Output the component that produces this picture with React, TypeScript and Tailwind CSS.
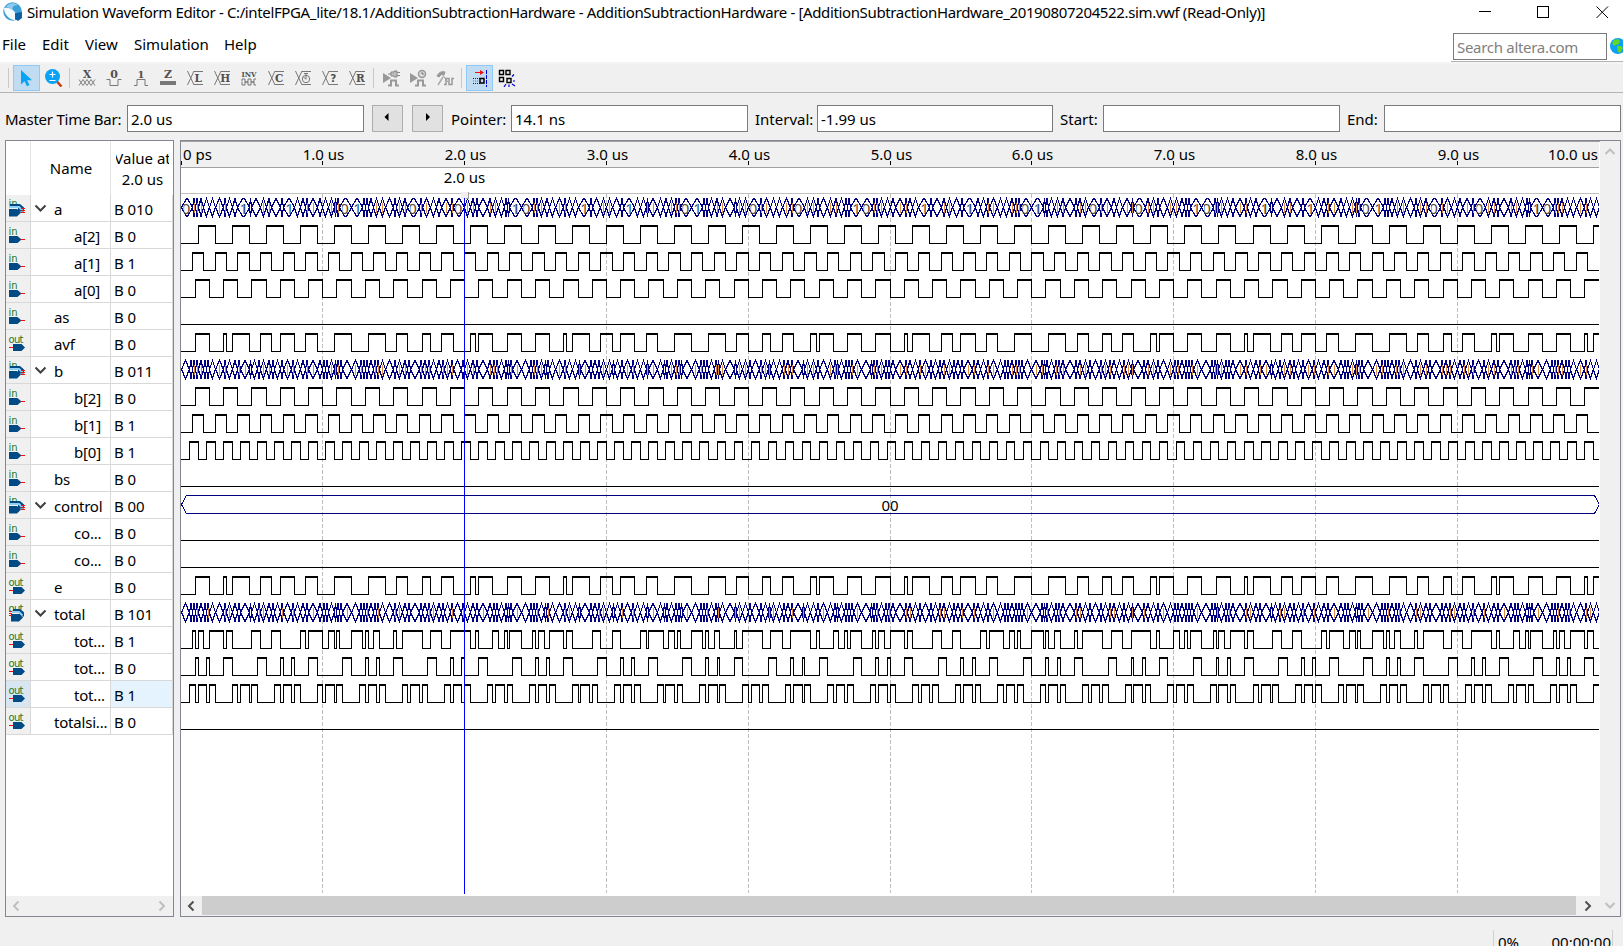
import React from "react";

const X0 = 181;
const SCALE = 0.1418;
const END = 10000;

type Fn = (t: number) => number;
const clock = (half: number): Fn => (t) => Math.floor(t / half) % 2;
const a2 = clock(120);
const a1 = clock(80);
const a0 = clock(100);
const b2 = clock(100);
const b1 = clock(80);
const b0 = clock(60);
const busA: Fn = (t) => a2(t) * 4 + a1(t) * 2 + a0(t);
const busB: Fn = (t) => b2(t) * 4 + b1(t) * 2 + b0(t);
const sum: Fn = (t) => busA(t) + busB(t);
const total: Fn = (t) => sum(t) & 7;
const bit = (f: Fn, n: number): Fn => (t) => (f(t) >> n) & 1;
const zero: Fn = () => 0;

type Row = {
  name: string;
  value: string;
  dir: "in" | "out";
  level: 0 | 1;
  bus?: boolean;
  fn: Fn;
  selected?: boolean;
};

const rows: Row[] = [
  { name: "a", value: "B 010", dir: "in", level: 0, bus: true, fn: busA },
  { name: "a[2]", value: "B 0", dir: "in", level: 1, fn: a2 },
  { name: "a[1]", value: "B 1", dir: "in", level: 1, fn: a1 },
  { name: "a[0]", value: "B 0", dir: "in", level: 1, fn: a0 },
  { name: "as", value: "B 0", dir: "in", level: 0, fn: zero },
  { name: "avf", value: "B 0", dir: "out", level: 0, fn: bit(sum, 3) },
  { name: "b", value: "B 011", dir: "in", level: 0, bus: true, fn: busB },
  { name: "b[2]", value: "B 0", dir: "in", level: 1, fn: b2 },
  { name: "b[1]", value: "B 1", dir: "in", level: 1, fn: b1 },
  { name: "b[0]", value: "B 1", dir: "in", level: 1, fn: b0 },
  { name: "bs", value: "B 0", dir: "in", level: 0, fn: zero },
  { name: "control", value: "B 00", dir: "in", level: 0, bus: true, fn: zero },
  { name: "co...", value: "B 0", dir: "in", level: 1, fn: zero },
  { name: "co...", value: "B 0", dir: "in", level: 1, fn: zero },
  { name: "e", value: "B 0", dir: "out", level: 0, fn: bit(sum, 3) },
  { name: "total", value: "B 101", dir: "out", level: 0, bus: true, fn: total },
  { name: "tot...", value: "B 1", dir: "out", level: 1, fn: bit(total, 2) },
  { name: "tot...", value: "B 0", dir: "out", level: 1, fn: bit(total, 1) },
  { name: "tot...", value: "B 1", dir: "out", level: 1, fn: bit(total, 0), selected: true },
  { name: "totalsi...", value: "B 0", dir: "out", level: 0, fn: zero },
];

type Seg = { s: number; e: number; v: number };
function segments(fn: Fn): Seg[] {
  const out: Seg[] = [];
  let s = 0;
  let v = fn(0);
  for (let t = 20; t < END; t += 20) {
    const n = fn(t);
    if (n !== v) {
      out.push({ s, e: t, v });
      s = t;
      v = n;
    }
  }
  out.push({ s, e: END, v });
  return out;
}
const px = (t: number) => Math.floor(X0 + t * SCALE) - X0;

/* Single-bit trace: thick high level, thin low level and edges. */
function BitWave({ fn, base }: { fn: Fn; base: number }) {
  let d = "";
  for (const g of segments(fn)) {
    const x1 = px(g.s);
    const x2 = px(g.e);
    const top = base - 18;
    if (g.v) d += `M${x1} ${top}H${x2 + 1}V${top + 2}H${x1}Z`;
    else d += `M${x1} ${base}H${x2 + 1}V${base + 1}H${x1}Z`;
    if (g.s > 0) d += `M${x1} ${top}h1V${base + 1}h-1Z`;
  }
  return <path d={d} fill="#000" fillRule="nonzero" />;
}

function BusWave({ fn, base, id }: { fn: Fn; base: number; id: string }) {
  const segs = segments(fn);
  const top = base - 18 + 0.5;
  const bot = base + 0.5;
  const mid = base - 9 + 0.5;
  let d = "";
  let marks = "";
  const labels: { x: number; c: string }[] = [];
  for (const g of segs) {
    const x1 = px(g.s) + 0.5;
    const x2 = px(g.e) + 0.5;
    const w = x2 - x1;
    const k = Math.min(5, w / 2);
    d += `M${x1} ${mid}L${x1 + k} ${top}H${x2 - k}L${x2} ${mid}L${x2 - k} ${bot}H${x1 + k}Z`;
    const m = (g.v >> 1) & 1;
    const c = (x1 + x2) / 2;
    if (w > 9) labels.push({ x: c, c: String(m) });
    else if (m) marks += `M${Math.floor(c)} ${base - 13}h1v10h-1Z`;
  }
  if (segs.length === 1) {
    return (
      <g>
        <path d={d} fill="none" stroke="#000080" shapeRendering="crispEdges" />
        <text x={709} y={base - 2} textAnchor="middle" fontSize="15">00</text>
      </g>
    );
  }
  return (
    <g>
      <path d={d} fill="none" stroke="#000080" strokeWidth="1.25" shapeRendering="crispEdges" />
      <path d={marks} fill="#dd8f3d" />
      {labels.map((l, i) => (
        <g key={i}>
          <clipPath id={`${id}-${i}`}>
            <rect x={l.x - 3.5} y={base - 15} width={7.5} height={14} />
          </clipPath>
          <text x={l.x + (l.c === "0" ? -1 : 0.5)} y={base - 2} textAnchor="middle" fontSize="15" clipPath={`url(#${id}-${i})`} fill={l.c === "1" ? "#174a86" : "#5a4630"}>
            {l.c}
          </text>
          {l.c === "1" && <rect x={Math.floor(l.x)} y={base - 12} width={1} height={10} fill="#dd8f3d" />}
        </g>
      ))}
    </g>
  );
}

/* Chart canvas: origin is (181,142) of the window. */
function Waveforms() {
  const ticks = [1, 2, 3, 4, 5, 6, 7, 8, 9];
  return (
    <svg width="1419" height="754" viewBox="0 0 1419 754" className="block shrink-0 overflow-hidden" shapeRendering="crispEdges" fontFamily="'Noto Sans', sans-serif">
      <rect width="1419" height="754" fill="#fff" />
      <rect width="1418" height="25" fill="#f0f0f0" />
      <rect y="25" width="1418" height="1" fill="#a0a0a0" />
      <rect y="51" width="1418" height="1" fill="#c0c0c0" />
      <g fontSize="15" fill="#000">
        <text x="2" y="18">0 ps</text>
        {ticks.map((t) => (
          <text key={t} x={px(t * 1000) + 1.5} y="18" textAnchor="middle">{t}.0 us</text>
        ))}
        <text x="1417" y="18" textAnchor="end">10.0 us</text>
        <text x="283.500" y="41" textAnchor="middle">2.0 us</text>
      </g>
      <rect x="0" y="19" width="1" height="4" />
      {ticks.map((t) => (
        <g key={t}>
          <rect x={px(t * 1000)} y="19" width="1" height="4" fill="#000" />
          <line x1={px(t * 1000) + 0.5} x2={px(t * 1000) + 0.5} y1="52" y2="751" stroke="#bfbfbf" strokeDasharray="4 2" />
        </g>
      ))}
      {rows.map((r, i) => {
        const base = 74 + i * 27;
        return r.bus ? <BusWave key={i} id={`bus${i}`} fn={r.fn} base={base} /> : <BitWave key={i} fn={r.fn} base={base} />;
      })}
      <rect x="1418" width="1" height="754" fill="#fff" />
      <rect x="280" y="50" width="8" height="7" fill="#f0f0f0" />
      <path d="M287.500 50v6.500h-3" fill="none" stroke="#a0a0a0" />
      <rect x="283" y="56" width="1" height="696" fill="#0000ff" />
    </svg>
  );
}

function PinIcon({ dir, bus }: { dir: "in" | "out"; bus?: boolean }) {
  const isIn = dir === "in";
  return (
    <svg width="24" height="26" viewBox="0 0 24 26" className="block shrink-0" fontFamily="'DejaVu Sans', sans-serif">
      <text x="2.500" y={bus ? 12 : 12.5} fontSize="10" fill="#1f7a1f" textLength={isIn ? 9 : 15}>{dir}</text>
      <g transform="translate(0 1)">
        {isIn && !bus && (
          <>
            <path d="M3 13h8.500l4 3.500l-4 3.500H3Z" fill="#004a86" />
            <path d="M14.500 16.500h4.500" stroke="#f01010" />
          </>
        )}
        {isIn && bus && (
          <>
            <path d="M4 8h10l4 3.500v4h-6V12H4Z" fill="#004a86" />
            <path d="M3 11h10l3.500 3.500" fill="none" stroke="#8fd0f8" strokeWidth="2" />
            <path d="M3 13h8l4 3.500l-4 4H3Z" fill="#004a86" />
            <path d="M15 12.500h4M15 14.500h4M15 16.500h4" stroke="#f01010" />
          </>
        )}
        {!isIn && !bus && (
          <>
            <path d="M7 13h8.500l3.500 3.500l-3.500 3.500H7Z" fill="#004a86" />
            <path d="M3 16.500h4" stroke="#f01010" />
          </>
        )}
        {!isIn && bus && (
          <>
            <path d="M7 8h7l4 3.500v4h-5V12H7Z" fill="#004a86" />
            <path d="M6 11h7l3.500 3.500" fill="none" stroke="#8fd0f8" strokeWidth="2" />
            <path d="M5 13h8l4 3.500l-4 4H5Z" fill="#004a86" />
            <path d="M3 10.500h3M3 12.500h3M3 14.500h3" stroke="#f01010" />
          </>
        )}
      </g>
    </svg>
  );
}

function TreeRow({ row }: { row: Row }) {
  const line = "border-b border-[#d8d8d8]";
  return (
    <div className="flex h-[27px] shrink-0 text-[15px] leading-[26px]">
      <div className={`w-[25px] border-r ${line} ${row.selected ? "bg-[#d8e6f2]" : "bg-[#f0f0f0]"}`}>
        <PinIcon dir={row.dir} bus={row.bus} />
      </div>
      <div className={`flex w-[80px] items-center overflow-hidden whitespace-nowrap border-r pt-0.5 ${line}`}>
        {row.bus ? (
          <svg width="23" height="26" viewBox="0 0 23 26" className="mb-1 block shrink-0">
            <path d="M4.500 11.500l5 5l5-5" fill="none" stroke="#404040" strokeWidth="2" />
          </svg>
        ) : (
          <span className={row.level ? "w-[43px] shrink-0" : "w-[23px] shrink-0"} />
        )}
        <span className="tracking-[-0.2px]">{row.name}</span>
      </div>
      <div className={`w-[62px] whitespace-nowrap border-r pl-[3px] pt-px tracking-[-0.05px] ${line} ${row.selected ? "bg-[#e5f3ff]" : ""}`}>{row.value}</div>
    </div>
  );
}

function Tool({ children, active }: { children: React.ReactNode; active?: boolean }) {
  return (
    <div className={`flex h-[26px] w-[27px] shrink-0 items-center justify-center ${active ? "border border-[#90c8f6] bg-[#c0dcf3]" : ""}`}>
      <svg width="18" height="18" viewBox="0 0 18 18" className="shrink-0" fill="none" stroke="#777" fontFamily="'DejaVu Serif', serif">
        {children}
      </svg>
    </div>
  );
}
const Sep = ({ className }: { className: string }) => <div className={`h-5 w-px shrink-0 bg-[#c8c8c8] ${className}`} />;

function Letter({ c, mono }: { c: string; mono?: boolean }) {
  return (
    <>
      <path d="M1.500 2l6.500 14M1.500 16L8 2M8 2.500h9M8 15.500h9" />
      <text x="12.300" y="13" textAnchor="middle" stroke="none" fill="#505050" fontSize="10.500" fontWeight="bold" fontFamily={mono ? "'DejaVu Sans', sans-serif" : "'DejaVu Serif', serif"}>{c}</text>
    </>
  );
}
const SmallGlyph = ({ c, size = 11 }: { c: string; size?: number }) => (
  <text x="9" y="9" textAnchor="middle" stroke="none" fill="#505050" fontSize={size} fontWeight="bold">{c}</text>
);

function Toolbar() {
  return (
    <div className="flex h-[29px] shrink-0 items-center border-b border-[#b4b4b4] bg-[#f0f0f0]">
      <Sep className="ml-[8px] mr-[4px]" />
      <Tool active>
        <path d="M3 1v14.500l3.500-3.200l2.500 5l2.500-1.200l-2.400-4.800H14Z" fill="#0aa2f5" stroke="none" />
      </Tool>
      <Tool>
        <path d="M10.500 11l6 6.500" stroke="#c63e14" strokeWidth="2.500" />
        <circle cx="7.500" cy="7.500" r="7.500" fill="#0aa2f5" stroke="none" />
        <path d="M4.500 5.500h6M7.500 2.500v6M4.500 11.500h6" stroke="#fff" strokeWidth="1.200" />
      </Tool>
      <Sep className="ml-[2px] mr-[3px]" />
      <Tool>
        <text x="9" y="8.500" textAnchor="middle" stroke="none" fill="#505050" fontSize="10.500" fontWeight="bold">X</text>
        <path d="M1 10.500l4 6l4-6l4 6l4-6M1 16.500l4-6l4 6l4-6l4 6" strokeWidth=".9" />
      </Tool>
      <Tool>
        <SmallGlyph c="0" />
        <path d="M1.500 10.500h3.500v6h8v-6h3.500" />
      </Tool>
      <Tool>
        <SmallGlyph c="1" size={10} />
        <path d="M2 16.500h3v-6h8v6h3" />
      </Tool>
      <Tool>
        <SmallGlyph c="Z" />
        <rect x="1" y="12" width="16" height="4" fill="#777" stroke="none" />
      </Tool>
      <Tool><Letter c="L" /></Tool>
      <Tool><Letter c="H" /></Tool>
      <Tool>
        <text x="1.500" y="8" stroke="none" fill="#505050" fontSize="8" fontWeight="bold" textLength="15" lengthAdjust="spacingAndGlyphs">INV</text>
        <path d="M2 12.500v-2.500h3v3h3v-3h3v3h3v-3h2M2 13v3h3v-3h3v3h3v-3h3v3h2" />
      </Tool>
      <Tool><Letter c="C" /></Tool>
      <Tool>
        <path d="M1.500 2l6.500 14M1.500 16L8 2M8 2.500h9M8 15.500h9" />
        <circle cx="12" cy="10" r="3.700" />
        <path d="M12 4v6M10 4.500h4M9.500 8l2.500 2.500" />
      </Tool>
      <Tool><Letter c="?" mono /></Tool>
      <Tool><Letter c="R" /></Tool>
      <Sep className="ml-[3px] mr-[3px]" />
      <Tool>
        <path d="M1 4l8 5l-8 5Z" fill="#999" stroke="none" />
        <path d="M9 3h3v-1h3v6h-3V7H9ZM6 5h3M15 3.500h3M15 6.500h3" fill="#bbb" stroke="#888" />
        <path d="M6 16.500h3v-5h5v5h3" strokeWidth="2" stroke="#999" />
      </Tool>
      <Tool>
        <path d="M1 4l8 5l-8 5Z" fill="#999" stroke="none" />
        <circle cx="13" cy="5" r="3.500" fill="#ddd" stroke="#999" strokeWidth="1.500" />
        <path d="M13 3v2h2" />
        <path d="M6 16.500h3v-5h5v5h3" strokeWidth="2" stroke="#999" />
      </Tool>
      <Tool>
        <path d="M1 7c2-4 5-5 8-4l-1 3l-2-1l-3 3ZM6 5l6 8" fill="#999" stroke="#999" />
        <path d="M7 8l-5 8" stroke="#aaa" strokeWidth="1.500" />
        <path d="M8 15.500h2v-6h3v6h3v-6h2" stroke="#999" strokeWidth="1.500" />
      </Tool>
      <Sep className="ml-[3px] mr-[4px]" />
      <Tool active>
        <path d="M4 3.500h7" stroke="#e11" />
        <path d="M9 1l4 2.500l-4 2.500" fill="#e11" stroke="none" />
        <path d="M2 9.500h7M2 14.500h7" stroke="#222" strokeDasharray="1 1" />
        <path d="M2 12h6" stroke="#777" strokeDasharray="1 1" />
        <rect x="9" y="9.500" width="4" height="4.500" stroke="#000" strokeWidth="1.500" />
        <path d="M15.500 1v17" stroke="#0000d8" strokeDasharray="4 1" />
      </Tool>
      <Tool>
        <path d="M1.500 1.500h4v4h-4ZM8 1.500h4v4H8ZM1.500 8.500h4v4h-4ZM9 9.500h4v4H9Z" stroke="#000" strokeWidth="1.400" />
        <path d="M14 7.500l2-2M15 12h2M14 15l3 2M11 15.500v2.500M8 15l-2 3" stroke="#0000d8" strokeWidth="1.200" />
      </Tool>
    </div>
  );
}

function Field({ label, value, lw, fw }: { label: string; value?: string; lw: string; fw: string }) {
  return (
    <>
      <div className={`shrink-0 whitespace-nowrap pt-0.5 ${lw}`}>{label}</div>
      <div className={`h-[27px] shrink-0 border border-[#7a7a7a] bg-white pl-[3px] pt-px leading-[25px] ${fw}`}>{value}</div>
    </>
  );
}
function Step({ d, className }: { d: string; className: string }) {
  return (
    <div className={`flex h-[27px] w-[31px] shrink-0 items-center justify-center border border-[#adadad] bg-[#e1e1e1] ${className}`}>
      <svg width="10" height="10" viewBox="0 0 10 10" className="mb-1"><path d={d} fill="#000" /></svg>
    </div>
  );
}
function Chevron({ d, color, className }: { d: string; color: string; className: string }) {
  return (
    <svg width="12" height="12" viewBox="0 0 12 12" className={`shrink-0 ${className}`}>
      <path d={d} fill="none" stroke={color} strokeWidth="2" />
    </svg>
  );
}
const LEFT = "M8.500 1.500L4 6l4.500 4.500";
const RIGHT = "M3.500 1.500L8 6l-4.500 4.500";

export default function App() {
  return (
    <div className="flex h-[946px] w-[1623px] flex-col overflow-hidden bg-[#f0f0f0] font-['Noto_Sans',sans-serif] text-[15px] text-black">
      <header className="flex h-[25px] shrink-0 items-start bg-white">
        <svg width="20" height="20" viewBox="0 0 20 20" className="ml-[3px] mt-[2px] shrink-0">
          <circle cx="9.500" cy="9.500" r="9.300" fill="#3e9fd6" />
          <path d="M3 5C5 1 11 0 15 3c-5 0-7 3-4 6c2 2 5 2 7 2c0 3-1 4-3 6C12 10 8 6 3 5Z" fill="#8ecbee" />
          <path d="M1 6c4-1 9 1 11 5c1 3 1 5 0 7c-3 0-5-1-7-3C2 12 1 9 1 6Z" fill="#f4fafd" />
          <path d="M12 11l7-1v6l-4 3l-3-2Z" fill="#0c62a5" />
        </svg>
        <div className="ml-[4px] w-[1440px] shrink-0 whitespace-nowrap text-[15px] leading-[25px] tracking-[-0.365px]">
          Simulation Waveform Editor - C:/intelFPGA_lite/18.1/AdditionSubtractionHardware - AdditionSubtractionHardware - [AdditionSubtractionHardware_20190807204522.sim.vwf (Read-Only)]
        </div>
        <svg width="150" height="24" viewBox="0 0 150 24" className="shrink-0" stroke="#000" fill="none">
          <path d="M12 11.500h12" />
          <rect x="70.500" y="6.500" width="11" height="11" />
          <path d="M129.500 6.500l11.500 11.500M141 6.500L129.500 18" />
        </svg>
      </header>
      <nav className="flex h-[37px] shrink-0 bg-white">
        <div className="flex w-[1451px] pl-[2px] pt-[7px] leading-[24px]">
          <span className="w-[40px]">File</span>
          <span className="w-[43px]">Edit</span>
          <span className="w-[49px]">View</span>
          <span className="w-[90px] tracking-[-0.05px]">Simulation</span>
          <span>Help</span>
        </div>
        <div className="flex flex-1 items-start overflow-hidden border-b border-[#b4b4b4] pl-[2px] pt-[8px]">
          <div className="h-[27px] w-[154px] shrink-0 border border-[#7a7a7a] pl-[3px] pt-px leading-[25px] tracking-[-0.5px] text-[#808080]"><span className="tracking-[-0.3px]">Search altera.com</span></div>
          <svg width="16" height="16" viewBox="0 0 16 16" className="ml-[3px] mt-[5px] shrink-0">
            <circle cx="8" cy="8" r="8" fill="#0aa2f5" />
            <path d="M4 2l4-1l2 2l-1 3l-3 1l-2 1l-2-3ZM7 8l4 0l2 2l-3 5l-2-1Z" fill="#62d62a" />
          </svg>
        </div>
      </nav>
      <div className="h-[2px] shrink-0 bg-[#f4f4f4]" />
      <Toolbar />
      <div className="flex h-[47px] shrink-0 items-start pt-[12px] leading-[24px]">
        <Field label="Master Time Bar:" value="2.0 us" lw="w-[127px] pl-[5px] tracking-[-0.25px]" fw="w-[237px]" />
        <Step d="M5.500 1v8L1.500 5Z" className="ml-[8px]" />
        <Step d="M3 1v8l4-4Z" className="ml-[9px]" />
        <Field label="Pointer:" value="14.1 ns" lw="w-[68px] pl-[8px]" fw="w-[237px]" />
        <Field label="Interval:" value="-1.99 us" lw="w-[69px] pl-[7px]" fw="w-[236px]" />
        <Field label="Start:" lw="w-[50px] pl-[7px]" fw="w-[237px]" />
        <Field label="End:" lw="w-[44px] pl-[7px]" fw="w-[237px]" />
      </div>
      <main className="flex h-[777px] shrink-0 pl-[5px]">
        <section className="flex w-[169px] shrink-0 flex-col border border-[#828790] bg-white">
          <div className="flex h-[54px] shrink-0">
            <div className="w-[25px] border-r border-[#e5e5e5]" />
            <div className="w-[80px] border-r border-[#e5e5e5] pl-px text-center leading-[55px]">Name</div>
            <div className="ml-[5px] flex w-[53px] flex-col items-center overflow-hidden whitespace-nowrap pt-[7px] leading-[21px]">
              <span>Value at</span>
              <span>2.0 us</span>
            </div>
          </div>
          {rows.map((r, i) => <TreeRow key={i} row={r} />)}
          <div className="flex-1" />
          <div className="flex h-[20px] shrink-0 items-center justify-between bg-[#f0f0f0] pl-[4px] pr-[5px]">
            <Chevron d={LEFT} color="#bfbfbf" className="" />
            <Chevron d={RIGHT} color="#bfbfbf" className="" />
          </div>
        </section>
        <section className="ml-[6px] flex w-[1441px] shrink-0 border border-[#828790] bg-white">
          <div className="flex w-[1419px] shrink-0 flex-col">
            <div className="h-px shrink-0 bg-[#a0a0a0]" />
            <Waveforms />
            <div className="flex h-[20px] shrink-0 items-center bg-[#f0f0f0]">
              <Chevron d={LEFT} color="#505050" className="ml-[4px] mr-[5px]" />
              <div className="mb-px h-[19px] w-[1374px] bg-[#cdcdcd]" />
              <Chevron d={RIGHT} color="#505050" className="ml-[6px]" />
            </div>
          </div>
          <div className="flex flex-1 flex-col items-center justify-between bg-[#f0f0f0] pb-[5px] pt-[5px]">
            <Chevron d="M1.500 8L6 3.500L10.500 8" color="#bfbfbf" className="" />
            <Chevron d="M1.500 4L6 8.500L10.500 4" color="#bfbfbf" className="" />
          </div>
        </section>
      </main>
      <footer className="mt-[13px] flex h-[30px] shrink-0 justify-end pr-[10px]">
        <div className="flex w-[120px] justify-between border-x border-[#d0d0d0] pl-1 pr-px pt-[2px] leading-[20px]">
          <span>0%</span>
          <span>00:00:00</span>
        </div>
      </footer>
    </div>
  );
}
